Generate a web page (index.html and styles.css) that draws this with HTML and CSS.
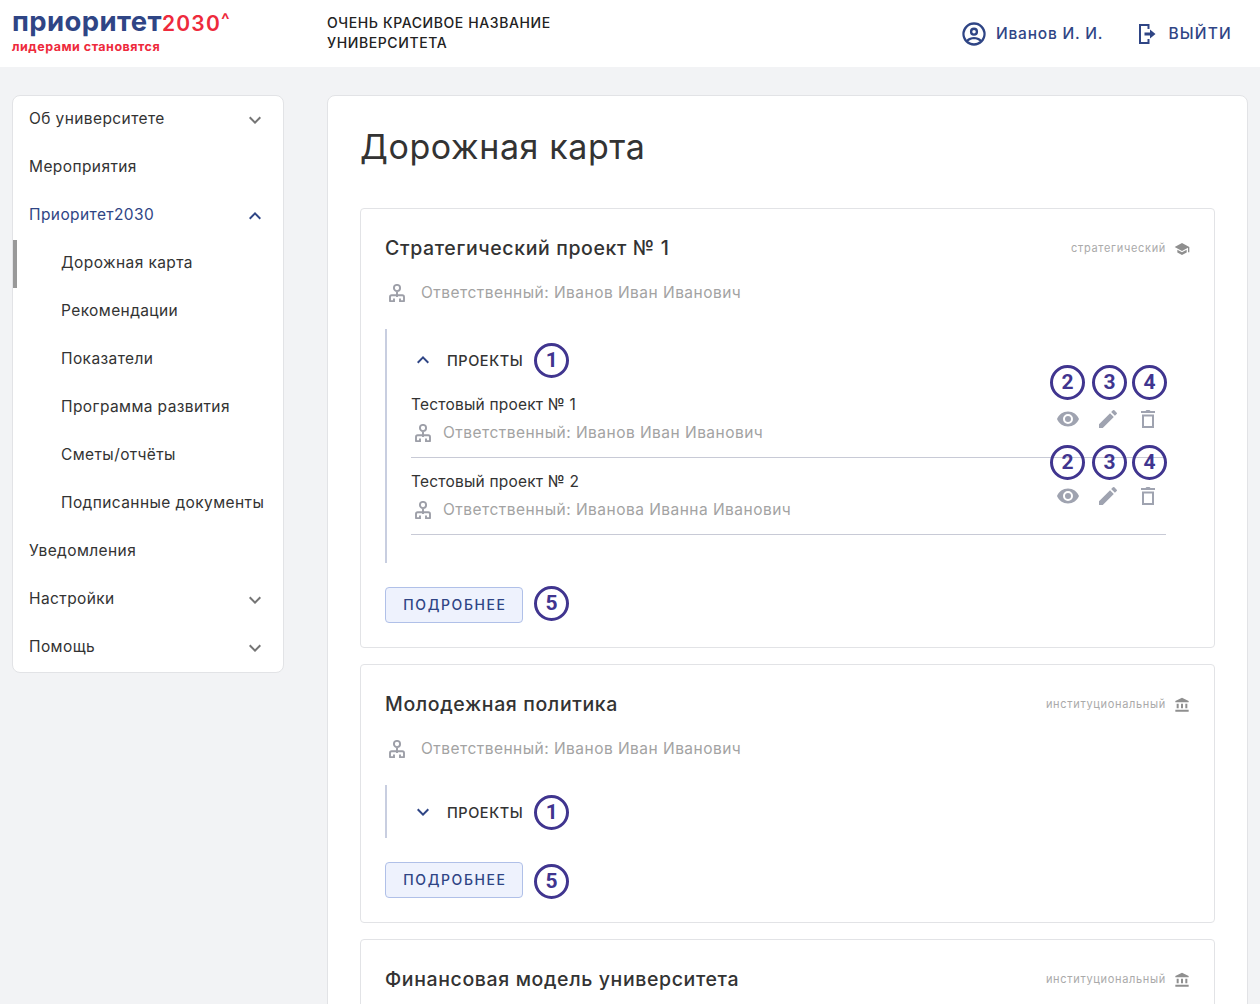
FILE: index.html
```html
<!DOCTYPE html>
<html lang="ru">
<head>
    <meta charset="UTF-8">
    <meta name="viewport" content="width=device-width, initial-scale=1.0">
    <title>Дорожная карта</title>
    <link rel="stylesheet" href="styles.css">
</head>
<body>
    <svg class="sprite" width="0" height="0">
        <symbol id="i-down" viewBox="0 0 24 24"><path d="M16.6 8.6 12 13.2 7.4 8.6 6 10l6 6 6-6z"/></symbol>
        <symbol id="i-up" viewBox="0 0 24 24"><path d="M12 8l-6 6 1.4 1.4L12 10.8l4.6 4.6L18 14z"/></symbol>
        <symbol id="i-person" viewBox="0 0 16 18"><circle cx="8" cy="4" r="3.1"/><path d="M8 8v5M1 17.100v-4.200c0-1 .7-1.700 1.700-1.700h10.600c1 0 1.700.7 1.700 1.700v4.200M.2 17.100h4.800v-2.600M15.800 17.100H11v-2.600"/></symbol>
        <symbol id="i-eye" viewBox="0 0 24 24"><path d="M12 4.500C7 4.500 2.700 7.600 1 12c1.700 4.400 6 7.500 11 7.500s9.300-3.100 11-7.500c-1.700-4.400-6-7.500-11-7.500zM12 17a5 5 0 1 1 0-10 5 5 0 0 1 0 10zm0-8a3 3 0 1 0 0 6 3 3 0 0 0 0-6z"/></symbol>
        <symbol id="i-pen" viewBox="0 0 24 24"><path d="M3 17.250V21h3.750L17.810 9.940l-3.750-3.750L3 17.250zM20.710 7.040a1 1 0 0 0 0-1.410l-2.340-2.340a1 1 0 0 0-1.410 0l-1.830 1.830 3.750 3.750 1.830-1.830z"/></symbol>
        <symbol id="i-trash" viewBox="0 0 24 24"><path d="M5 4h4.500l1-1h3l1 1H19v2H5zM6 7.500h12V21H6zm2 2V19h8V9.500z" fill-rule="evenodd"/></symbol>
        <symbol id="i-school" viewBox="0 0 24 24"><path d="M5 13.200v4L12 21l7-3.800v-4L12 17zM12 3 1 9l11 6 9-4.900V17h2V9z"/></symbol>
        <symbol id="i-bank" viewBox="0 0 24 24"><path d="M4 10v7h3v-7zm6.500 0v7h3v-7zM2 22h20v-3H2zm15-12v7h3v-7zM12 1 2 6v2h20V6z"/></symbol>
    </svg>

    <div class="page">
        <header class="topbar">
            <div class="logo">
                <div class="logo-name">приоритет<span class="logo-year">2030<span class="logo-caret">^</span></span></div>
                <div class="logo-tag">лидерами становятся</div>
            </div>
            <div class="uni-name">ОЧЕНЬ КРАСИВОЕ НАЗВАНИЕ<br>УНИВЕРСИТЕТА</div>
            <div class="user">
                <svg class="user-icon" viewBox="0 0 24 24"><path d="M12 2a10 10 0 1 0 0 20 10 10 0 0 0 0-20zm0 2a8 8 0 0 1 6.300 12.900C16.800 15.200 14.500 14.500 12 14.500s-4.800.7-6.300 2.400A8 8 0 0 1 12 4zm0 2.500a3.500 3.500 0 1 0 0 7 3.500 3.500 0 0 0 0-7zm0 2a1.500 1.500 0 1 1 0 3 1.500 1.500 0 0 1 0-3zm0 8c1.900 0 3.600.5 4.900 1.800A8 8 0 0 1 12 20a8 8 0 0 1-4.900-1.700c1.300-1.300 3-1.800 4.900-1.800z"/></svg>
                <span>Иванов И. И.</span>
            </div>
            <div class="logout">
                <svg class="logout-icon" viewBox="0 0 20 22"><path d="M2 1h10.500v5h-2V3H4v16h6.500v-3h2v5H2z"/><path d="M7.500 9.500H13V6.500l5.500 4.500-5.500 4.500v-3H7.500z"/></svg>
                <span>ВЫЙТИ</span>
            </div>
        </header>

        <div class="layout">
            <nav class="sidebar">
                <a class="nav-item">Об университете<svg class="chev"><use href="#i-down"/></svg></a>
                <a class="nav-item">Мероприятия</a>
                <a class="nav-item nav-open">Приоритет2030<svg class="chev"><use href="#i-up"/></svg></a>
                <a class="nav-item nav-sub nav-active">Дорожная карта</a>
                <a class="nav-item nav-sub">Рекомендации</a>
                <a class="nav-item nav-sub">Показатели</a>
                <a class="nav-item nav-sub">Программа развития</a>
                <a class="nav-item nav-sub">Сметы/отчёты</a>
                <a class="nav-item nav-sub">Подписанные документы</a>
                <a class="nav-item">Уведомления</a>
                <a class="nav-item">Настройки<svg class="chev"><use href="#i-down"/></svg></a>
                <a class="nav-item">Помощь<svg class="chev"><use href="#i-down"/></svg></a>
            </nav>

            <main class="content">
                <h1>Дорожная карта</h1>

                <section class="card">
                    <div class="card-head">
                        <h2>Стратегический проект № 1</h2>
                        <div class="kind">стратегический<svg class="kind-icon"><use href="#i-school"/></svg></div>
                    </div>
                    <div class="owner"><svg class="owner-icon"><use href="#i-person"/></svg>Ответственный: Иванов Иван Иванович</div>

                    <div class="projects">
                        <div class="projects-head">
                            <svg class="projects-chev"><use href="#i-up"/></svg>
                            <span class="projects-title">ПРОЕКТЫ</span>
                            <span class="mark">1</span>
                        </div>
                        <div class="project">
                            <div>
                                <div class="project-name">Тестовый проект № 1</div>
                                <div class="owner owner-small"><svg class="owner-icon"><use href="#i-person"/></svg>Ответственный: Иванов Иван Иванович</div>
                            </div>
                            <div class="actions">
                                <div class="action"><svg class="eye"><use href="#i-eye"/></svg><span class="mark mark-over mark-view">2</span></div>
                                <div class="action"><svg><use href="#i-pen"/></svg><span class="mark mark-over mark-edit">3</span></div>
                                <div class="action"><svg><use href="#i-trash"/></svg><span class="mark mark-over mark-del">4</span></div>
                            </div>
                        </div>
                        <div class="project">
                            <div>
                                <div class="project-name">Тестовый проект № 2</div>
                                <div class="owner owner-small"><svg class="owner-icon"><use href="#i-person"/></svg>Ответственный: Иванова Иванна Иванович</div>
                            </div>
                            <div class="actions">
                                <div class="action"><svg class="eye"><use href="#i-eye"/></svg><span class="mark mark-over mark-view">2</span></div>
                                <div class="action"><svg><use href="#i-pen"/></svg><span class="mark mark-over mark-edit">3</span></div>
                                <div class="action"><svg><use href="#i-trash"/></svg><span class="mark mark-over mark-del">4</span></div>
                            </div>
                        </div>
                    </div>

                    <div class="card-foot">
                        <button class="more">ПОДРОБНЕЕ</button>
                        <span class="mark mark-up">5</span>
                    </div>
                </section>

                <section class="card">
                    <div class="card-head">
                        <h2>Молодежная политика</h2>
                        <div class="kind">институциональный<svg class="kind-icon"><use href="#i-bank"/></svg></div>
                    </div>
                    <div class="owner"><svg class="owner-icon"><use href="#i-person"/></svg>Ответственный: Иванов Иван Иванович</div>

                    <div class="projects projects-closed">
                        <div class="projects-head">
                            <svg class="projects-chev"><use href="#i-down"/></svg>
                            <span class="projects-title">ПРОЕКТЫ</span>
                            <span class="mark">1</span>
                        </div>
                    </div>

                    <div class="card-foot">
                        <button class="more">ПОДРОБНЕЕ</button>
                        <span class="mark mark-down">5</span>
                    </div>
                </section>

                <section class="card">
                    <div class="card-head">
                        <h2>Финансовая модель университета</h2>
                        <div class="kind">институциональный<svg class="kind-icon"><use href="#i-bank"/></svg></div>
                    </div>
                </section>
            </main>
        </div>
    </div>
</body>
</html>
```

FILE: styles.css
```css
* {
    box-sizing: border-box;
}

html, body {
    margin: 0;
    height: 100%;
    overflow: hidden;
}

body {
    background-color: #f2f3f5;
    font-family: Inter, "Noto Sans", sans-serif;
    color: #333;
}

.sprite {
    position: absolute;
}

.page {
    height: 100vh;
    overflow: hidden;
}

/* top bar */
.topbar {
    display: flex;
    align-items: center;
    height: 67px;
    background-color: #fff;
    padding: 0 28px 0 12px;
}

.logo {
    width: 315px;
    height: 67px;
    padding-top: 5px;
}

.logo-name {
    font-size: 27.5px;
    line-height: 32px;
    font-weight: 700;
    color: #2f4585;
    letter-spacing: 0.4px;
    white-space: nowrap;
}

.logo-year {
    font-size: 21px;
    color: #ee2a3c;
    font-weight: 600;
    letter-spacing: 1.2px;
}

.logo-caret {
    font-size: 18px;
    position: relative;
    top: -5px;
}

.logo-tag {
    font-size: 12.5px;
    line-height: 16px;
    font-weight: 700;
    letter-spacing: 0.5px;
    color: #ee2a3c;
    margin-top: -2px;
}

.uni-name {
    flex: 1;
    font-size: 14px;
    line-height: 20px;
    font-weight: 500;
    letter-spacing: 0.6px;
    color: #222;
    margin-top: -1px;
}

.user, .logout {
    display: flex;
    align-items: center;
    color: #2f4585;
    font-size: 15.5px;
    font-weight: 500;
}

.user {
    gap: 8px;
    margin-right: 34px;
    letter-spacing: 0.8px;
}

.user-icon {
    width: 28px;
    height: 28px;
    fill: #2f4585;
}

.logout {
    gap: 11px;
    letter-spacing: 1.2px;
}

.logout-icon {
    width: 20px;
    height: 22px;
    fill: #2f4585;
}

.layout {
    display: flex;
    align-items: flex-start;
    gap: 43px;
    padding: 28px 12px 0;
}

/* side menu */
.sidebar {
    flex: 0 0 272px;
    background-color: #fff;
    border: 1px solid #e2e3e6;
    border-radius: 8px;
}

.nav-item {
    position: relative;
    display: flex;
    align-items: center;
    justify-content: space-between;
    height: 48px;
    padding: 0 16px 4px;
    font-size: 15.5px;
    letter-spacing: 0.4px;
    color: #333;
}

.nav-sub {
    padding-left: 48px;
}

.nav-open {
    color: #2f4585;
}

.nav-active::before {
    content: "";
    position: absolute;
    left: 0;
    top: 0;
    width: 4px;
    height: 48px;
    background-color: #999;
}

.chev {
    width: 24px;
    height: 24px;
    fill: #757575;
    margin-top: 4px;
}

.nav-open .chev {
    fill: #2f4585;
}

/* main area */
.content {
    flex: 0 0 921px;
    background-color: #fff;
    border: 1px solid #e2e3e6;
    border-radius: 8px;
    padding: 0 32px;
}

h1 {
    margin: 29px 0 39px;
    font-size: 34px;
    line-height: 44px;
    font-weight: 400;
    letter-spacing: 0.6px;
    color: #333;
}

.card {
    background-color: #fff;
    border: 1px solid #e2e3e6;
    border-radius: 4px;
    padding: 24px;
    margin-bottom: 16px;
}

.card-head {
    display: flex;
    align-items: center;
    justify-content: space-between;
    height: 30px;
}

h2 {
    margin: 0;
    font-size: 19.5px;
    font-weight: 500;
    letter-spacing: 0.62px;
    color: #333;
}

.kind {
    display: flex;
    align-items: center;
    font-size: 11px;
    letter-spacing: 0.68px;
    color: #aaa;
}

.kind-icon {
    width: 16px;
    height: 16px;
    fill: #8f8f8f;
    margin: 2px 0 0 8px;
}

.owner {
    display: flex;
    align-items: center;
    height: 24px;
    margin-top: 17px;
    font-size: 15.5px;
    letter-spacing: 0.47px;
    color: #a3a3a3;
}

.owner-icon {
    width: 16px;
    height: 18px;
    fill: none;
    stroke: #9d9fa8;
    stroke-width: 1.9;
    margin: 2px 16px 0 4px;
}

.owner-small {
    margin-top: 3px;
}

.owner-small .owner-icon {
    margin-right: 12px;
}

/* nested project list */
.projects {
    margin-top: 25px;
    border-left: 2px solid #c8cee0;
    padding: 13px 0 28px 24px;
}

.projects-closed {
    padding: 9px 0 8px 24px;
}

.projects-head {
    display: flex;
    align-items: center;
    height: 36px;
}

.projects-chev {
    width: 24px;
    height: 24px;
    fill: #2f4585;
    margin-right: 12px;
}

.projects-title {
    font-size: 14.5px;
    font-weight: 500;
    letter-spacing: 0.55px;
    color: #333;
    margin-right: 11px;
}

.project {
    display: flex;
    align-items: center;
    justify-content: space-between;
    border-bottom: 1px solid #c8cad6;
    padding: 12px 0 13px;
    margin-right: 24px;
}

.projects-head + .project {
    padding-top: 15px;
}

.project-name {
    font-size: 15.5px;
    line-height: 24px;
    letter-spacing: 0.2px;
    color: #333;
}

.actions {
    display: flex;
    margin-right: -2px;
}

.action {
    position: relative;
    display: flex;
    align-items: center;
    justify-content: center;
    width: 40px;
    height: 24px;
}

.action svg {
    width: 24px;
    height: 24px;
    fill: #9fa3b0;
}

.card-foot {
    display: flex;
    align-items: center;
    gap: 11px;
    height: 36px;
    margin-top: 24px;
}

.more {
    width: 138px;
    height: 36px;
    padding: 0 0 2px 2px;
    background-color: #eef2fd;
    border: 1px solid #b0c0e8;
    border-radius: 4px;
    font-family: Inter, "Noto Sans", sans-serif;
    font-size: 14px;
    font-weight: 500;
    letter-spacing: 1.6px;
    color: #2f4585;
}

/* numbered callouts laid over the screen */
.mark {
    display: inline-flex;
    align-items: center;
    justify-content: center;
    flex: 0 0 35px;
    width: 35px;
    height: 35px;
    border: 3px solid #40358f;
    border-radius: 50%;
    font-family: Roboto, sans-serif;
    font-size: 21px;
    font-weight: 700;
    color: #40358f;
}

.mark-over {
    position: absolute;
    top: -42px;
}

.project + .project .mark-over {
    top: -39px;
}

.mark-view {
    left: 2px;
}

.mark-edit, .mark-del {
    left: 4px;
}

.mark-up {
    margin-top: -4px;
}

.mark-down {
    margin-top: 2px;
}
```
